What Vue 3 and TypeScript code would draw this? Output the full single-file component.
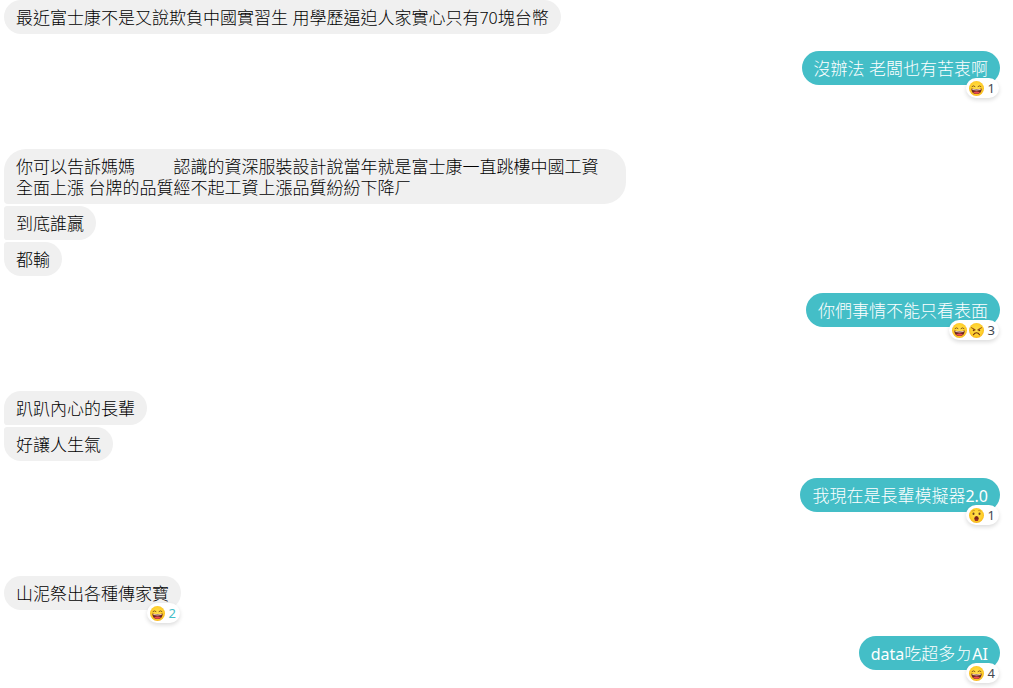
<script setup lang="ts">
type Mood = 'laugh' | 'angry' | 'wow'
interface Part { text: string; latin?: boolean }
interface Message { parts: Part[]; moods?: Mood[]; count?: number; reacted?: boolean }
interface Group { mine: boolean; space: 'none' | 'turn' | 'small' | 'large'; messages: Message[] }

const line = (text: string): Part[] =>
  text.split(/([A-Za-z0-9.]+)/).filter(Boolean).map((t) => ({ text: t, latin: /^[A-Za-z0-9.]+$/.test(t) }))

const groups: Group[] = [
  { mine: false, space: 'none', messages: [{ parts: line('最近富士康不是又說欺負中國實習生 用學歷逼迫人家實心只有70塊台幣') }] },
  { mine: true, space: 'turn', messages: [{ parts: line('沒辦法 老闆也有苦衷啊'), moods: ['laugh'], count: 1 }] },
  {
    mine: false,
    space: 'large',
    messages: [
      { parts: line('你可以告訴媽媽\u3000\u3000 認識的資深服裝設計說當年就是富士康一直跳樓中國工資全面上漲 台牌的品質經不起工資上漲品質紛紛下降ㄏ') },
      { parts: line('到底誰贏') },
      { parts: line('都輸') },
    ],
  },
  { mine: true, space: 'turn', messages: [{ parts: line('你們事情不能只看表面'), moods: ['laugh', 'angry'], count: 3 }] },
  { mine: false, space: 'large', messages: [{ parts: line('趴趴內心的長輩') }, { parts: line('好讓人生氣') }] },
  { mine: true, space: 'turn', messages: [{ parts: line('我現在是長輩模擬器2.0'), moods: ['wow'], count: 1 }] },
  { mine: false, space: 'large', messages: [{ parts: line('山泥祭出各種傳家寶'), moods: ['laugh'], count: 2, reacted: true }] },
  { mine: true, space: 'small', messages: [{ parts: line('data吃超多ㄉAI'), moods: ['laugh'], count: 4 }] },
]
</script>

<template>
  <main class="chat">
    <svg class="defs" aria-hidden="true">
      <defs>
        <radialGradient id="face" cx="50%" cy="45%" r="55%">
          <stop offset="0" stop-color="#ffdf50" />
          <stop offset="0.7" stop-color="#ffd02c" />
          <stop offset="1" stop-color="#f7b51e" />
        </radialGradient>
      </defs>
    </svg>
    <section v-for="(group, g) in groups" :key="g" class="group" :class="[group.space, { mine: group.mine }]">
      <div v-for="(message, m) in group.messages" :key="m" class="bubble">
        <template v-for="(part, p) in message.parts" :key="p"><span v-if="part.latin" class="latin">{{ part.text }}</span><template v-else>{{ part.text }}</template></template>
        <button v-if="message.moods" type="button" class="badge" :class="{ reacted: message.reacted }">
          <svg v-for="mood in message.moods" :key="mood" class="emoji" viewBox="0 0 30 30" role="img" :aria-label="mood">
            <circle cx="15" cy="15" r="15" fill="url(#face)" />
            <g v-if="mood === 'laugh'">
              <path d="M6 11 Q9 8 12 11 M24 11 Q21 8 18 11" fill="none" stroke="#8a5c1a" stroke-width="2" stroke-linecap="round" />
              <path d="M4.500 15 Q15 17 25.500 15 Q25 26 15 26 Q5 26 4.500 15Z" fill="#6d2522" />
              <path d="M6.500 16 Q15 17.500 23.500 16 L23 18 Q15 19.500 7 18Z" fill="#f3dfc8" />
              <path d="M8 23 Q15 18.500 22 23 Q15 28 8 23Z" fill="#ee4b50" />
            </g>
            <g v-else-if="mood === 'angry'">
              <path d="M5 9.500 L12.500 13.500 M25 9.500 L17.500 13.500" fill="none" stroke="#8c4a12" stroke-width="2" stroke-linecap="round" />
              <circle cx="9.500" cy="14.500" r="2" fill="#79340d" />
              <circle cx="20.500" cy="14.500" r="2" fill="#79340d" />
              <path d="M9 23.500 Q11 19.500 15 19.500 Q19 19.500 21 23.500" fill="none" stroke="#79340d" stroke-width="2.200" stroke-linecap="round" />
            </g>
            <g v-else>
              <path d="M6 6.500 Q8 4 11 5 M24 6.500 Q22 4 19 5" fill="none" stroke="#c08a20" stroke-width="1.500" stroke-linecap="round" />
              <ellipse cx="9" cy="11.500" rx="2" ry="2.600" fill="#6b4320" />
              <ellipse cx="21" cy="11.500" rx="2" ry="2.600" fill="#6b4320" />
              <ellipse cx="15" cy="21" rx="4.400" ry="5.200" fill="#7a221c" />
              <ellipse cx="15" cy="24" rx="3" ry="2" fill="#a52c27" />
            </g>
          </svg>
          <span class="count">{{ message.count }}</span>
        </button>
      </div>
    </section>
  </main>
</template>

<style>
body {
  margin: 0;
  background: #fff;
}
</style>

<style scoped>
.chat {
  display: flex;
  flex-direction: column;
  box-sizing: border-box;
  min-height: 100vh;
  padding: 0 13px 18px 4px;
  font-family: "Noto Sans", "Noto Sans CJK TC", sans-serif;
  font-size: 17px;
  font-weight: 300;
  line-height: 21px;
  color: #000;
}
.defs {
  position: absolute;
  width: 0;
  height: 0;
}
.group {
  display: flex;
  flex-direction: column;
  align-items: flex-start;
  gap: 2px;
}
.group.mine {
  align-items: flex-end;
}
.turn {
  margin-top: 17px;
}
.small {
  margin-top: 26px;
}
.large {
  margin-top: 64px;
}
.bubble {
  position: relative;
  box-sizing: border-box;
  max-width: 622px;
  padding: 7px 12px 6px;
  border-radius: 22px;
  background: #f0f0f0;
}
.bubble:not(:first-child) {
  border-top-left-radius: 4px;
}
.bubble:not(:last-child) {
  border-bottom-left-radius: 4px;
}
.mine .bubble {
  background: #44bec7;
  color: #fff;
}
.latin {
  font-family: "Noto Sans", "Open Sans", sans-serif;
  font-size: 16px;
  line-height: 16px;
}
.mine .latin {
  font-weight: 400;
}
.badge {
  position: absolute;
  right: 1px;
  bottom: -13px;
  display: flex;
  align-items: center;
  gap: 2px;
  height: 20px;
  padding: 0 4px 0 3px;
  border: 0;
  border-radius: 10px;
  background: #fff;
  box-shadow: 0 2px 4px rgba(0, 0, 0, 0.14);
  font-family: "Noto Sans", sans-serif;
  font-size: 13px;
  line-height: 20px;
  color: #444950;
  cursor: pointer;
}
.emoji {
  display: block;
  width: 15px;
  height: 15px;
}
.count {
  margin-left: 2px;
}
.reacted {
  color: #44bec7;
}
</style>
